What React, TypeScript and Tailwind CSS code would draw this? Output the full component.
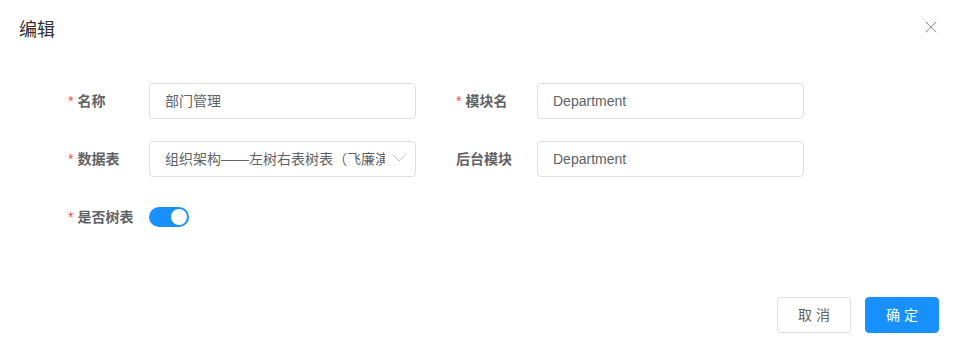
import { ChevronDown, X } from "lucide-react";

const font = "font-['Liberation_Sans','Noto_Sans_CJK_SC',sans-serif]";

function Label({ text, required }: { text: string; required?: boolean }) {
    return (
        <div className="flex w-[81px] shrink-0 items-center text-[14px] font-bold text-[#606266]">
            {required && <span className="mr-[4px] font-normal text-[#ff4949]">*</span>}
            {text}
        </div>
    );
}

function TextInput({ value }: { value: string }) {
    return (
        <div className="flex h-[36px] w-[267px] items-center rounded-[4px] border border-[#dcdfe6] px-[15px] text-[14px] text-[#606266]">
            {value}
        </div>
    );
}

function SelectInput({ value }: { value: string }) {
    return (
        <div className="relative flex h-[36px] w-[267px] items-center rounded-[4px] border border-[#dcdfe6] pl-[15px] pr-[30px] text-[14px] text-[#606266]">
            <span className="overflow-hidden whitespace-nowrap">{value}</span>
            <ChevronDown className="absolute right-[4px] top-[4px] h-[24px] w-[24px] text-[#c0c4cc]" strokeWidth={1} />
        </div>
    );
}

export default function App() {
    return (
        <div className={`flex h-[352px] w-[959px] flex-col bg-white ${font}`}>
            <div className="flex items-start justify-between pl-[19px] pr-[18px]">
                <div className="pt-[18px] text-[18px] leading-[24px] text-[#303133]">编辑</div>
                <button type="button" className="mt-[17px] text-[#909399]" aria-label="关闭">
                    <X className="h-[20px] w-[20px]" strokeWidth={1.2} />
                </button>
            </div>

            <div className="flex flex-col gap-[22px] pl-[68px] pt-[41px]">
                <div className="flex h-[36px] items-center">
                    <div className="flex w-[388px] items-center">
                        <Label text="名称" required />
                        <TextInput value="部门管理" />
                    </div>
                    <div className="flex items-center">
                        <Label text="模块名" required />
                        <TextInput value="Department" />
                    </div>
                </div>
                <div className="flex h-[36px] items-center">
                    <div className="flex w-[388px] items-center">
                        <Label text="数据表" required />
                        <SelectInput value="组织架构——左树右表树表（飞廉演示）" />
                    </div>
                    <div className="flex items-center">
                        <Label text="后台模块" />
                        <TextInput value="Department" />
                    </div>
                </div>
                <div className="flex h-[36px] items-center">
                    <Label text="是否树表" required />
                    <div className="flex h-[20px] w-[40px] items-center justify-end rounded-full bg-[#1890ff] px-[2px]">
                        <div className="h-[16px] w-[16px] rounded-full bg-white" />
                    </div>
                </div>
            </div>

            <div className="mt-[62px] flex justify-end gap-[14px] pr-[20px]">
                <button
                    type="button"
                    className="h-[36px] w-[74px] rounded-[4px] border border-[#dcdfe6] bg-white text-[14px] text-[#606266]"
                >
                    取 消
                </button>
                <button
                    type="button"
                    className="h-[36px] w-[74px] rounded-[4px] border border-[#1890ff] bg-[#1890ff] text-[14px] text-white"
                >
                    确 定
                </button>
            </div>
        </div>
    );
}
